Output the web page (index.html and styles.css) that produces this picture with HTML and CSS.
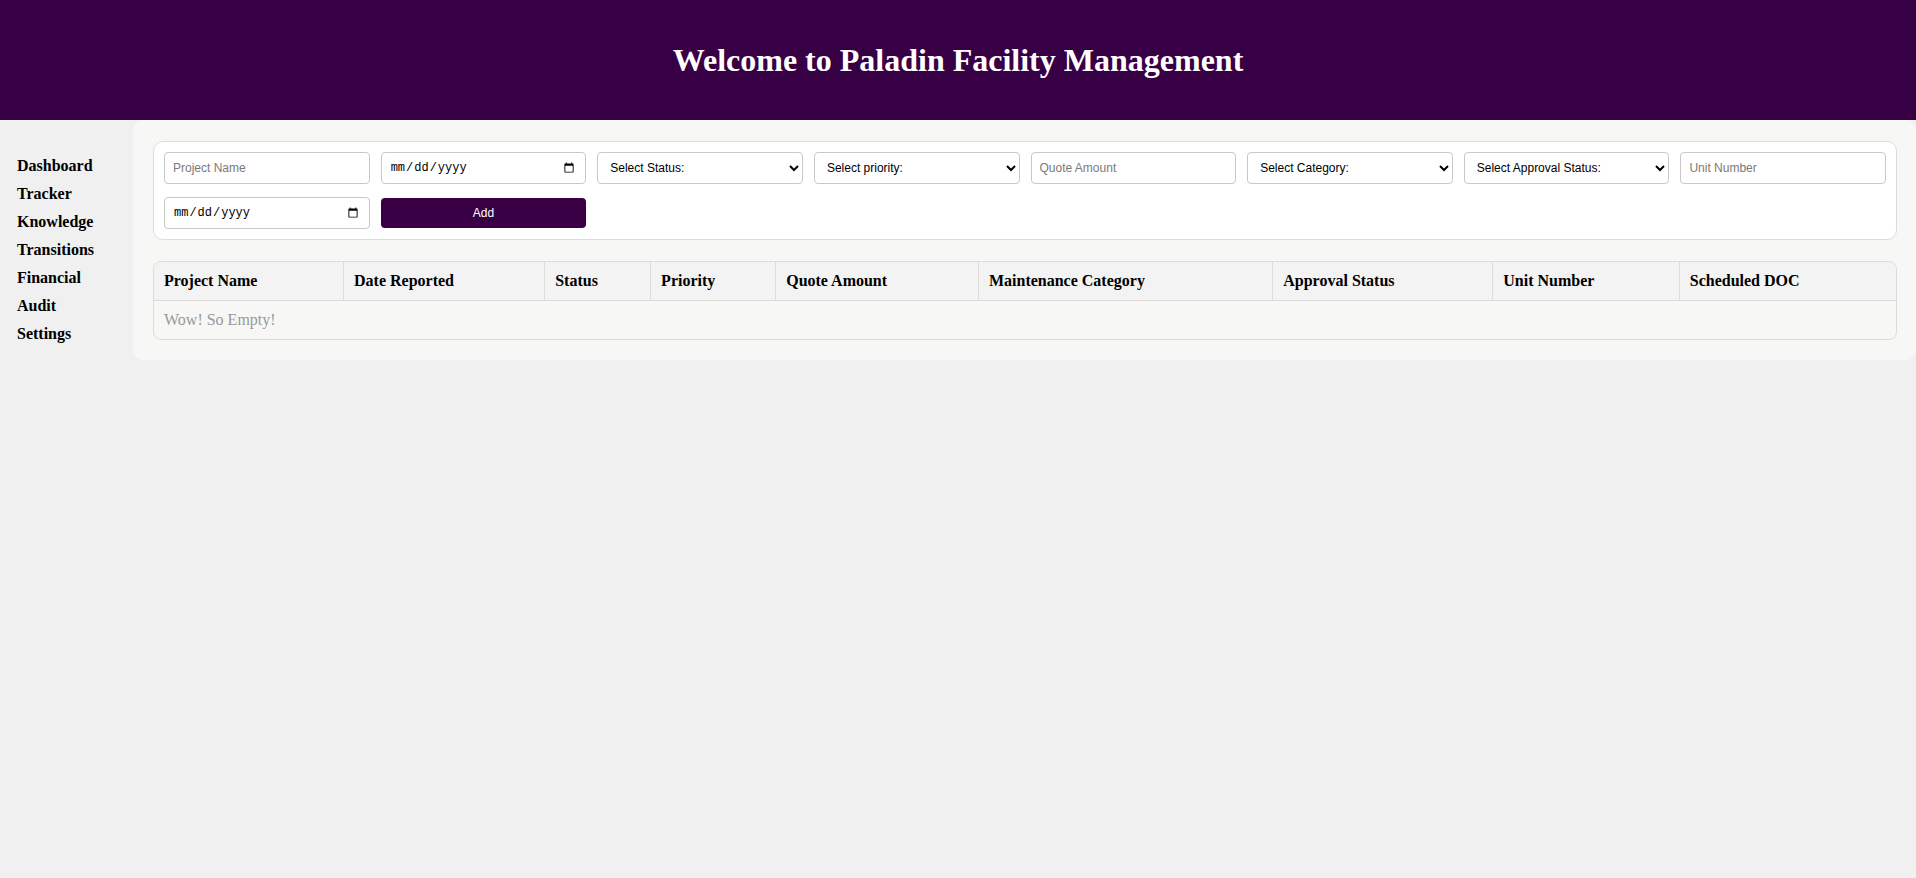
FILE: index.html
```html
<!DOCTYPE html>
<html lang="en">
<head>
<meta charset="utf-8">
<title>Paladin Facility Management</title>
<link rel="stylesheet" href="styles.css">
</head>
<body>
<header class="top">
  <h1 class="title">Welcome to Paladin Facility Management</h1>
</header>
<div class="layout">
  <nav class="sidebar">
    <a class="nav-link" href="#">Dashboard</a>
    <a class="nav-link" href="#">Tracker</a>
    <a class="nav-link" href="#">Knowledge</a>
    <a class="nav-link" href="#">Transitions</a>
    <a class="nav-link" href="#">Financial</a>
    <a class="nav-link" href="#">Audit</a>
    <a class="nav-link" href="#">Settings</a>
  </nav>
  <main class="panel">
    <form class="entry-form">
      <input class="field" type="text" placeholder="Project Name">
      <input class="field" type="date">
      <select class="field">
        <option>Select Status:</option>
      </select>
      <select class="field">
        <option>Select priority:</option>
      </select>
      <input class="field" type="text" placeholder="Quote Amount">
      <select class="field">
        <option>Select Category:</option>
      </select>
      <select class="field">
        <option>Select Approval Status:</option>
      </select>
      <input class="field" type="text" placeholder="Unit Number">
      <input class="field" type="date">
      <button class="add-btn" type="button">Add</button>
    </form>
    <div class="table-wrap">
      <table class="data-table">
        <thead>
          <tr>
            <th>Project Name</th>
            <th>Date Reported</th>
            <th>Status</th>
            <th>Priority</th>
            <th>Quote Amount</th>
            <th>Maintenance Category</th>
            <th>Approval Status</th>
            <th>Unit Number</th>
            <th>Scheduled DOC</th>
          </tr>
        </thead>
        <tbody>
          <tr>
            <td class="empty" colspan="9">Wow! So Empty!</td>
          </tr>
        </tbody>
      </table>
    </div>
  </main>
</div>
</body>
</html>
```
FILE: styles.css
```css
html, body {
  margin: 0;
  padding: 0;
}
body {
  background: #f0f0f0;
  font-family: "Liberation Serif", "Times New Roman", serif;
  color: #000;
}
.top {
  background: #380044;
  height: 120px;
  display: flex;
  align-items: center;
  justify-content: center;
}
.title {
  margin: 0;
  color: #fff;
  font-size: 32px;
  font-weight: bold;
  line-height: 37px;
}
.layout {
  display: flex;
  align-items: flex-start;
}
.sidebar {
  width: 133px;
  flex: none;
  padding-top: 32px;
  display: flex;
  flex-direction: column;
}
.nav-link {
  display: block;
  padding: 5px 17px;
  line-height: 18px;
  font-size: 16px;
  font-weight: bold;
  color: #000;
  text-decoration: none;
}
.panel {
  flex: 1;
  background: #f7f8f6;
  border-radius: 10px;
  padding: 21px 19px 20px 20px;
}
.entry-form {
  margin: 0;
  background: #fff;
  border: 1px solid #dcdcdc;
  border-radius: 10px;
  padding: 10px;
  display: grid;
  grid-template-columns: repeat(8, 1fr);
  column-gap: 11px;
  row-gap: 13px;
}
.field {
  box-sizing: border-box;
  height: 32px;
  width: 100%;
  border: 1px solid #c8c8c8;
  border-radius: 4px;
  background: #fff;
  padding: 0 8px;
  font-family: "Liberation Sans", Arial, sans-serif;
  font-size: 12px;
  color: #000;
  margin: 0;
}
input[type="date"].field {
  font-family: "Liberation Mono", "DejaVu Sans Mono", monospace;
  font-size: 12px;
}
.field::placeholder {
  color: #7a7a7a;
}
.add-btn {
  box-sizing: border-box;
  height: 30px;
  align-self: center;
  width: 100%;
  border: none;
  border-radius: 4px;
  background: #3a0045;
  color: #fff;
  font-family: "Liberation Sans", Arial, sans-serif;
  font-size: 12px;
  cursor: pointer;
}
.table-wrap {
  margin-top: 21px;
  border: 1px solid #dcdcdc;
  border-radius: 8px;
  overflow: hidden;
}
.data-table {
  width: 100%;
  border-collapse: collapse;
  font-size: 16px;
}
.data-table th {
  background: #f3f3f3;
  text-align: left;
  font-weight: bold;
  padding: 10px 10px;
  line-height: 18px;
  border-right: 1px solid #dcdcdc;
  border-bottom: 1px solid #dcdcdc;
}
.data-table th:last-child {
  border-right: none;
}
.data-table td {
  padding: 10px 10px;
  line-height: 18px;
}
.empty {
  color: #999;
}
```
